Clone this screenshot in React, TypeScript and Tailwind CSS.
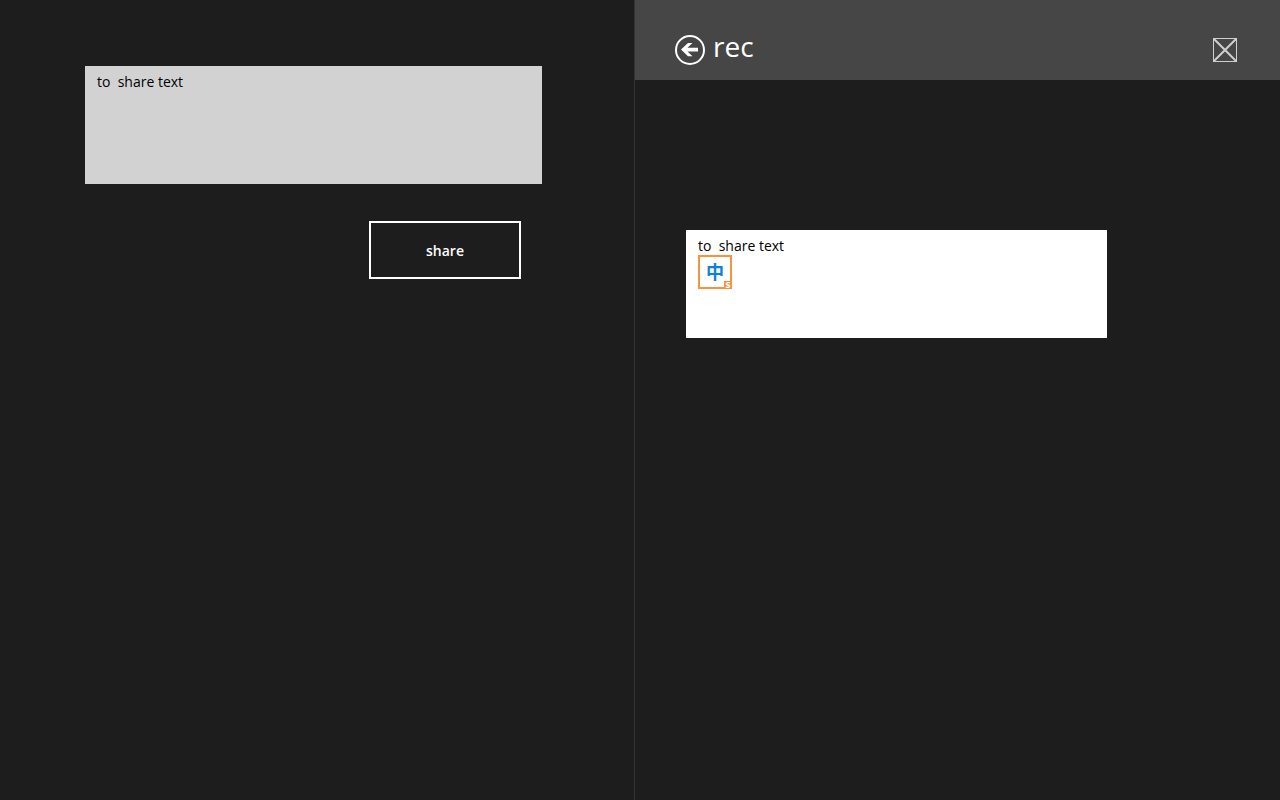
import { useState } from "react";

function BackIcon() {
  return (
    <svg viewBox="0 0 30 30" className="size-[30px]" aria-hidden="true">
      <circle cx="15" cy="15" r="14" fill="none" stroke="#fff" strokeWidth="2" />
      <path d="M6 14.5 L13 8 H17.5 L12.5 12.8 H23 V16.4 H12.5 L17.5 21.2 H13 Z" fill="#fff" />
    </svg>
  );
}

function CloseIcon() {
  return (
    <svg viewBox="0 0 24 24" className="size-6" aria-hidden="true" fill="none" stroke="#cfcfcf">
      <rect x="0.5" y="0.5" width="23" height="23" />
      <path d="M1 1 L23 23 M23 1 L1 23" strokeWidth="2" />
    </svg>
  );
}

function InputMethodBadge() {
  return (
    <div className="absolute top-[25px] left-3 flex size-[34px] items-center justify-center border-2 border-[#f9933b] bg-white">
      <span className="text-lg leading-none font-bold text-[#0c80dc]">中</span>
      <span className="absolute -right-0.5 -bottom-0.5 flex size-2 items-center justify-center bg-[#f9933b] pb-0.5 text-[10px] leading-none font-bold text-white">
        s
      </span>
    </div>
  );
}

function SharePane() {
  const [text, setText] = useState("to  share text");
  return (
    <section className="flex flex-col pt-[66px] pr-[92px] pl-[85px]">
      <textarea
        aria-label="Text to share"
        spellCheck={false}
        value={text}
        onChange={(e) => setText(e.target.value)}
        className="block h-[118px] w-full resize-none bg-[#d2d2d2] px-3 py-1.5 text-sm text-black outline-none"
      />
      <button
        type="button"
        className="mt-[37px] mr-[21px] h-[58px] w-[152px] self-end border-2 border-white pt-0.5 text-sm font-semibold text-white"
      >
        share
      </button>
    </section>
  );
}

function ReceivePane() {
  const [text, setText] = useState("to  share text");
  return (
    <section className="border-l border-[#343434]">
      <header className="flex h-20 items-center bg-[#464646] pt-5 pr-[43px] pl-10">
        <button type="button" aria-label="Back">
          <BackIcon />
        </button>
        <h1 className="ml-2 -mt-2 text-[28px] leading-8 text-white">rec</h1>
        <button type="button" aria-label="Close" className="ml-auto">
          <CloseIcon />
        </button>
      </header>
      <div className="pt-[150px] pr-[173px] pl-[51px]">
        <div className="relative">
          <textarea
            aria-label="Received text"
            spellCheck={false}
            value={text}
            onChange={(e) => setText(e.target.value)}
            className="block h-[108px] w-full resize-none bg-white px-3 py-1.5 text-sm text-black outline-none"
          />
          <InputMethodBadge />
        </div>
      </div>
    </section>
  );
}

export default function App() {
  return (
    <main className="grid min-h-screen grid-cols-[634fr_646fr] bg-[#1d1d1d] font-['Open_Sans','Noto_Sans_CJK_SC',sans-serif]">
      <SharePane />
      <ReceivePane />
    </main>
  );
}
